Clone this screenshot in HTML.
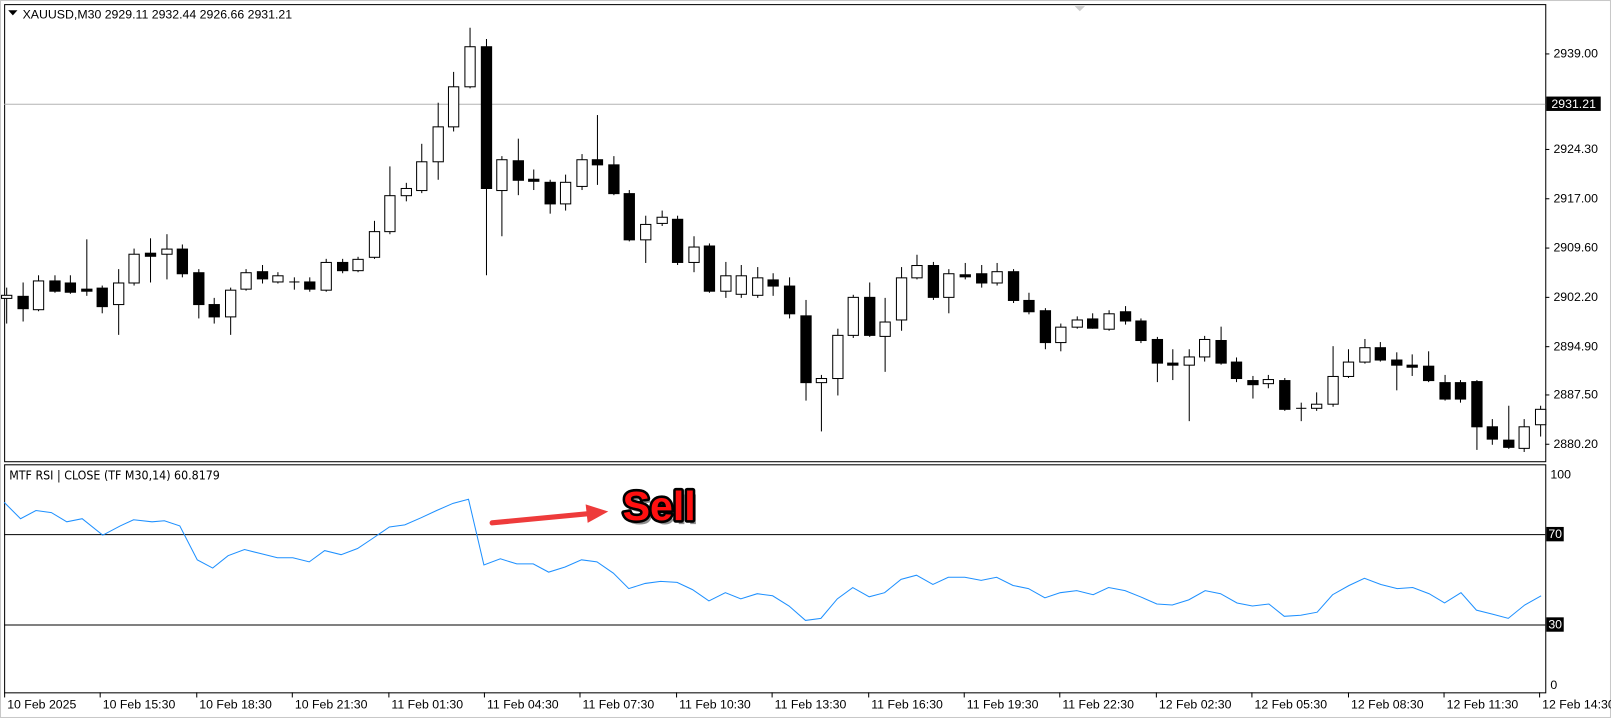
<!DOCTYPE html>
<html><head><meta charset="utf-8"><style>
html,body{margin:0;padding:0;background:#fff;}
svg{display:block}
text{font-family:"Liberation Sans",Tahoma,sans-serif;}
</style></head><body>
<svg id="s" width="1611" height="718" viewBox="0 0 1568 699" preserveAspectRatio="none" xmlns="http://www.w3.org/2000/svg">
<rect x="0.5" y="0.5" width="1567" height="698" fill="#fff" stroke="#c8c8c8"/>
<rect x="4.5" y="4.5" width="1500" height="445" fill="#fff" stroke="#000"/>
<rect x="4.5" y="452.5" width="1500" height="222" fill="#fff" stroke="#000"/>
<line x1="4" y1="101.5" x2="1504" y2="101.5" stroke="#b4b4b4"/>
<line x1="4" y1="520.5" x2="1504" y2="520.5" stroke="#000"/>
<line x1="4" y1="608.5" x2="1504" y2="608.5" stroke="#000"/>
<polygon points="1046,6 1056,6 1051,11" fill="#ccc"/>
<g id="c"></g>
<g id="ax" font-size="12" fill="#000"></g>
<polyline id="rsi" fill="none" stroke="#1e90ff" stroke-width="1"/>
<polygon points="8,10 17,10 12.5,15" fill="#000"/>
<text x="22" y="18" font-size="12">XAUUSD,M30  2929.11 2932.44 2926.66 2931.21</text>
<text x="9" y="467" font-size="12" style="font-family:'DejaVu Sans Condensed','Liberation Sans Narrow',sans-serif">MTF RSI | CLOSE  (TF M30,14) 60.8179</text>
<line x1="479" y1="509" x2="574" y2="500" stroke="#ee3b3b" stroke-width="5" stroke-linecap="round"/>
<polygon points="570,491 592,498 572,509" fill="#ee3b3b"/>
<text x="606" y="506" font-size="40" font-weight="bold" fill="#222" opacity="0.5" transform="translate(3,4)">Sell</text>
<text x="606" y="506" font-size="40" font-weight="bold" fill="#ff1010" stroke="#000" stroke-width="5" paint-order="stroke" stroke-linejoin="round">Sell</text>
</svg>
<script>
var d=[[280,290,287,315],[275,288,300,313],[268,301,273,303],[268,273,283,285],[268,275,284,286],[233,281,283,288],[278,280,298,305],[262,296,275,326],[242,275,247,278],[232,246,249,275],[228,247,242,272],[238,242,266,270],[262,265,296,310],[290,296,308,315],[280,308,282,326],[262,281,265,283],[258,264,271,276],[265,274,268,276],[270,274,275,282],[270,274,281,284],[252,282,255,284],[252,255,263,266],[250,263,252,265],[215,250,225,252],[162,225,190,228],[178,190,183,196],[140,185,157,188],[100,157,123,175],[70,123,84,128],[27,84,45,86],[38,45,183,268],[152,185,155,230],[135,156,175,190],[165,174,176,185],[175,177,198,208],[170,198,177,205],[150,181,155,185],[112,155,160,180],[152,160,188,190],[185,188,233,235],[210,233,218,256],[205,217,211,220],[210,213,255,258],[230,255,240,265],[237,239,283,285],[255,283,268,290],[258,286,268,290],[260,287,270,290],[266,272,278,288],[270,278,305,310],[292,307,372,390],[365,372,368,420],[320,368,326,385],[287,326,289,329],[275,289,326,328],[290,327,313,362],[260,311,270,322],[248,270,258,272],[255,258,289,292],[262,289,266,305],[256,267,269,272],[258,266,275,280],[256,275,264,278],[262,264,292,295],[285,292,303,306],[300,302,333,340],[315,333,318,342],[308,318,311,320],[305,310,319,320],[302,320,305,322],[298,303,312,316],[310,312,331,334],[328,330,353,372],[340,353,355,370],[340,355,347,410],[327,347,330,352],[318,331,353,355],[348,352,368,372],[366,370,374,388],[365,373,369,378],[368,370,398,400],[392,397,398,410],[382,397,393,400],[337,393,366,396],[340,366,352,368],[330,352,338,354],[333,338,350,352],[343,350,355,380],[345,355,357,366],[342,356,370,372],[365,372,388,390],[370,372,388,392],[370,371,415,438],[408,415,427,433],[395,428,435,437],[408,436,415,440],[395,413,398,425]];
var g=document.getElementById('c'),h='';
d.forEach(function(c,i){var x=Math.round(6+i*15.55)+0.5;var t=Math.min(c[1],c[2]),b=Math.max(c[1],c[2]);var up=c[2]<c[1];
h+='<line x1="'+x+'" y1="'+c[0]+'" x2="'+x+'" y2="'+c[3]+'" stroke="#000"/>';
if(b-t<2){h+='<line x1="'+(x-5)+'" y1="'+t+'.5" x2="'+(x+5)+'" y2="'+t+'.5" stroke="#000"/>';}
else h+='<rect x="'+(x-5)+'" y="'+t+'.5" width="10" height="'+(b-t)+'" fill="'+(up?'#fff':'#000')+'" stroke="#000"/>';});
g.innerHTML=h;
var p=[[4,489],[20,505],[35,497],[50,499],[65,508],[80,505],[100,521],[117,512],[130,506],[148,508],[160,507],[175,512],[192,545],[207,553],[222,541],[238,535],[254,539],[270,543],[285,543],[301,547],[316,536],[332,540],[348,534],[363,524],[379,513],[394,511],[410,504],[425,497],[441,490],[456,486],[471,550],[487,544],[503,549],[519,549],[534,557],[550,552],[566,545],[581,547],[597,558],[612,573],[628,568],[643,566],[659,567],[674,574],[690,585],[706,577],[721,583],[737,578],[752,580],[768,590],[784,604],[799,602],[815,583],[830,572],[846,581],[861,577],[877,564],[892,560],[908,569],[923,562],[939,562],[955,565],[970,562],[986,570],[1001,573],[1017,582],[1032,577],[1048,575],[1064,579],[1079,572],[1095,575],[1110,581],[1126,588],[1141,589],[1157,584],[1173,575],[1188,578],[1204,587],[1219,590],[1235,588],[1250,600],[1266,599],[1282,596],[1297,579],[1313,570],[1328,563],[1344,569],[1360,573],[1375,572],[1391,578],[1406,587],[1422,577],[1437,594],[1453,598],[1468,602],[1484,589],[1500,580]];
document.getElementById('rsi').setAttribute('points',p.map(function(a){return a.join(',')}).join(' '));
var a='';
[[52,'2939.00'],[145,'2924.30'],[193,'2917.00'],[241,'2909.60'],[289,'2902.20'],[337,'2894.90'],[384,'2887.50'],[432,'2880.20']].forEach(function(l){a+='<line x1="1504" y1="'+l[0]+'.5" x2="1508" y2="'+l[0]+'.5" stroke="#000"/><text x="1512" y="'+(l[0]+4)+'">'+l[1]+'</text>';});
a+='<rect x="1505" y="94" width="53" height="14" fill="#000"/><text x="1510" y="105" fill="#fff">2931.21</text>';
a+='<text x="1509" y="466">100</text><text x="1509" y="671">0</text>';
a+='<rect x="1505" y="513" width="17" height="14" fill="#000"/><text x="1507" y="524" fill="#fff">70</text>';
a+='<rect x="1505" y="601" width="17" height="14" fill="#000"/><text x="1507" y="612" fill="#fff">30</text>';
var L=['10 Feb 2025','10 Feb 15:30','10 Feb 18:30','10 Feb 21:30','11 Feb 01:30','11 Feb 04:30','11 Feb 07:30','11 Feb 10:30','11 Feb 13:30','11 Feb 16:30','11 Feb 19:30','11 Feb 22:30','12 Feb 02:30','12 Feb 05:30','12 Feb 08:30','12 Feb 11:30','12 Feb 14:30'];
L.forEach(function(s,i){var x=Math.round(4+i*93.4);a+='<line x1="'+(x+.5)+'" y1="674" x2="'+(x+.5)+'" y2="679" stroke="#000"/><text x="'+(x+3)+'" y="690">'+s+'</text>';});
document.getElementById('ax').innerHTML=a;
</script>
</body></html>
